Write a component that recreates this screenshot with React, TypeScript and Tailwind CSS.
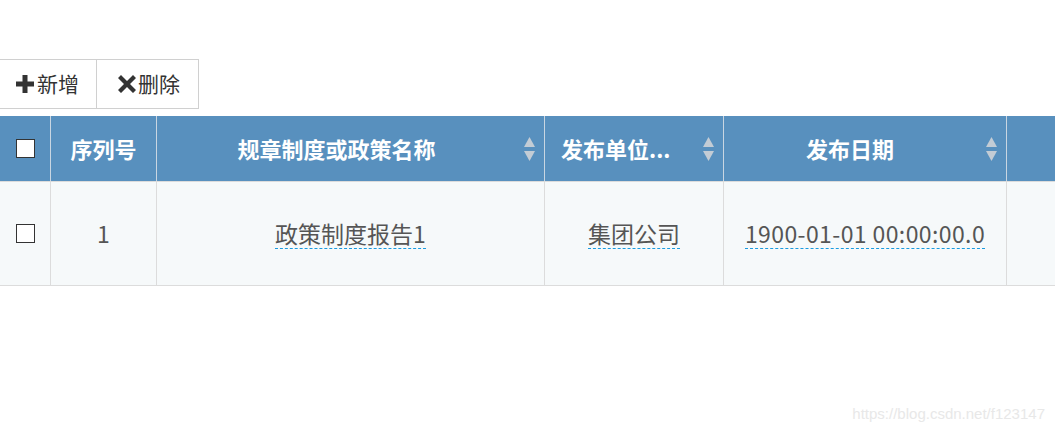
import React from "react";

const font = { fontFamily: '"Noto Sans CJK SC", "Noto Sans", sans-serif' };

function SortIcon() {
  return (
    <svg width="13" height="26" viewBox="0 0 13 26" className="absolute right-[8px] top-1/2 -translate-y-1/2">
      <path d="M6.5 1 L12 11 L1 11 Z" fill="#c3ccd5" />
      <path d="M6.5 25 L12 15 L1 15 Z" fill="#c3ccd5" />
    </svg>
  );
}

function Box() {
  return <span className="block h-[19px] w-[19px] border-[1.5px] border-[#333] bg-white" />;
}

function Cell({ text, wide }: { text: string; wide?: boolean }) {
  return (
    <span
      className={
        wide
          ? "border-b border-dashed border-[#1a9be0] pb-[1px] leading-[28px] tracking-[0.4px]"
          : "border-b border-dashed border-[#1a9be0] pb-[1px] leading-[28px]"
      }
    >
      {text}
    </span>
  );
}

export default function App() {
  return (
    <div className="relative h-[439px] w-[1055px] overflow-hidden bg-white" style={font}>
      <div className="h-[59px]" />
      <div className="flex h-[50px] text-[21px] text-[#333]">
        <button className="flex w-[97px] items-center border-y border-r border-[#d0d0d0] pl-[15px]">
          <svg width="20" height="20" viewBox="0 0 20 20" className="mr-[2px]">
            <path d="M7.5 1h5v6.5H19v5h-6.5V19h-5v-6.5H1v-5h6.5z" fill="#333" />
          </svg>
          新增
        </button>
        <button className="flex w-[102px] items-center border-y border-r border-[#d0d0d0] pl-[20px]">
          <svg width="20" height="20" viewBox="0 0 20 20" className="mr-[1px]">
            <path d="M4 1l6 6 6-6 3 3-6 6 6 6-3 3-6-6-6 6-3-3 6-6-6-6z" fill="#333" />
          </svg>
          删除
        </button>
      </div>
      <div className="h-[7px]" />
      <div className="flex h-[65px] w-[1100px] bg-[#5890be] text-[22px] font-bold text-white">
        <div className="flex w-[51px] items-center justify-center border-r border-[#c9d6e2]">
          <Box />
        </div>
        <div className="flex w-[106px] items-center justify-center border-r border-[#c9d6e2]">序列号</div>
        <div className="relative flex w-[388px] items-center justify-center border-r border-[#c9d6e2] pr-[28px]">
          规章制度或政策名称
          <SortIcon />
        </div>
        <div className="relative flex w-[179px] items-center border-r border-[#c9d6e2] pl-[16px] pr-[28px]">
          <span className="whitespace-nowrap">发布单位...</span>
          <SortIcon />
        </div>
        <div className="relative flex w-[283px] items-center justify-center border-r border-[#c9d6e2] pr-[30px]">
          发布日期
          <SortIcon />
        </div>
        <div className="flex-1" />
      </div>
      <div className="flex h-[105px] w-[1100px] border-y border-[#dcdcdc] bg-[#f6f9fa] text-[23px] text-[#555]">
        <div className="flex w-[51px] items-center justify-center border-r border-[#dcdcdc]">
          <Box />
        </div>
        <div className="flex w-[106px] items-center justify-center border-r border-[#dcdcdc]">1</div>
        <div className="flex w-[388px] items-center justify-center border-r border-[#dcdcdc]">
          <Cell text="政策制度报告1" />
        </div>
        <div className="flex w-[179px] items-center justify-center border-r border-[#dcdcdc]">
          <Cell text="集团公司" />
        </div>
        <div className="flex w-[283px] items-center justify-center border-r border-[#dcdcdc]">
          <Cell text="1900-01-01 00:00:00.0" wide />
        </div>
        <div className="flex-1" />
      </div>
      <div
        className="absolute bottom-[14px] right-[10px] text-[15px] text-[#e8e8e8]"
        style={{ fontFamily: '"Liberation Sans", Arial, sans-serif' }}
      >
        https://blog.csdn.net/f123147
      </div>
    </div>
  );
}
